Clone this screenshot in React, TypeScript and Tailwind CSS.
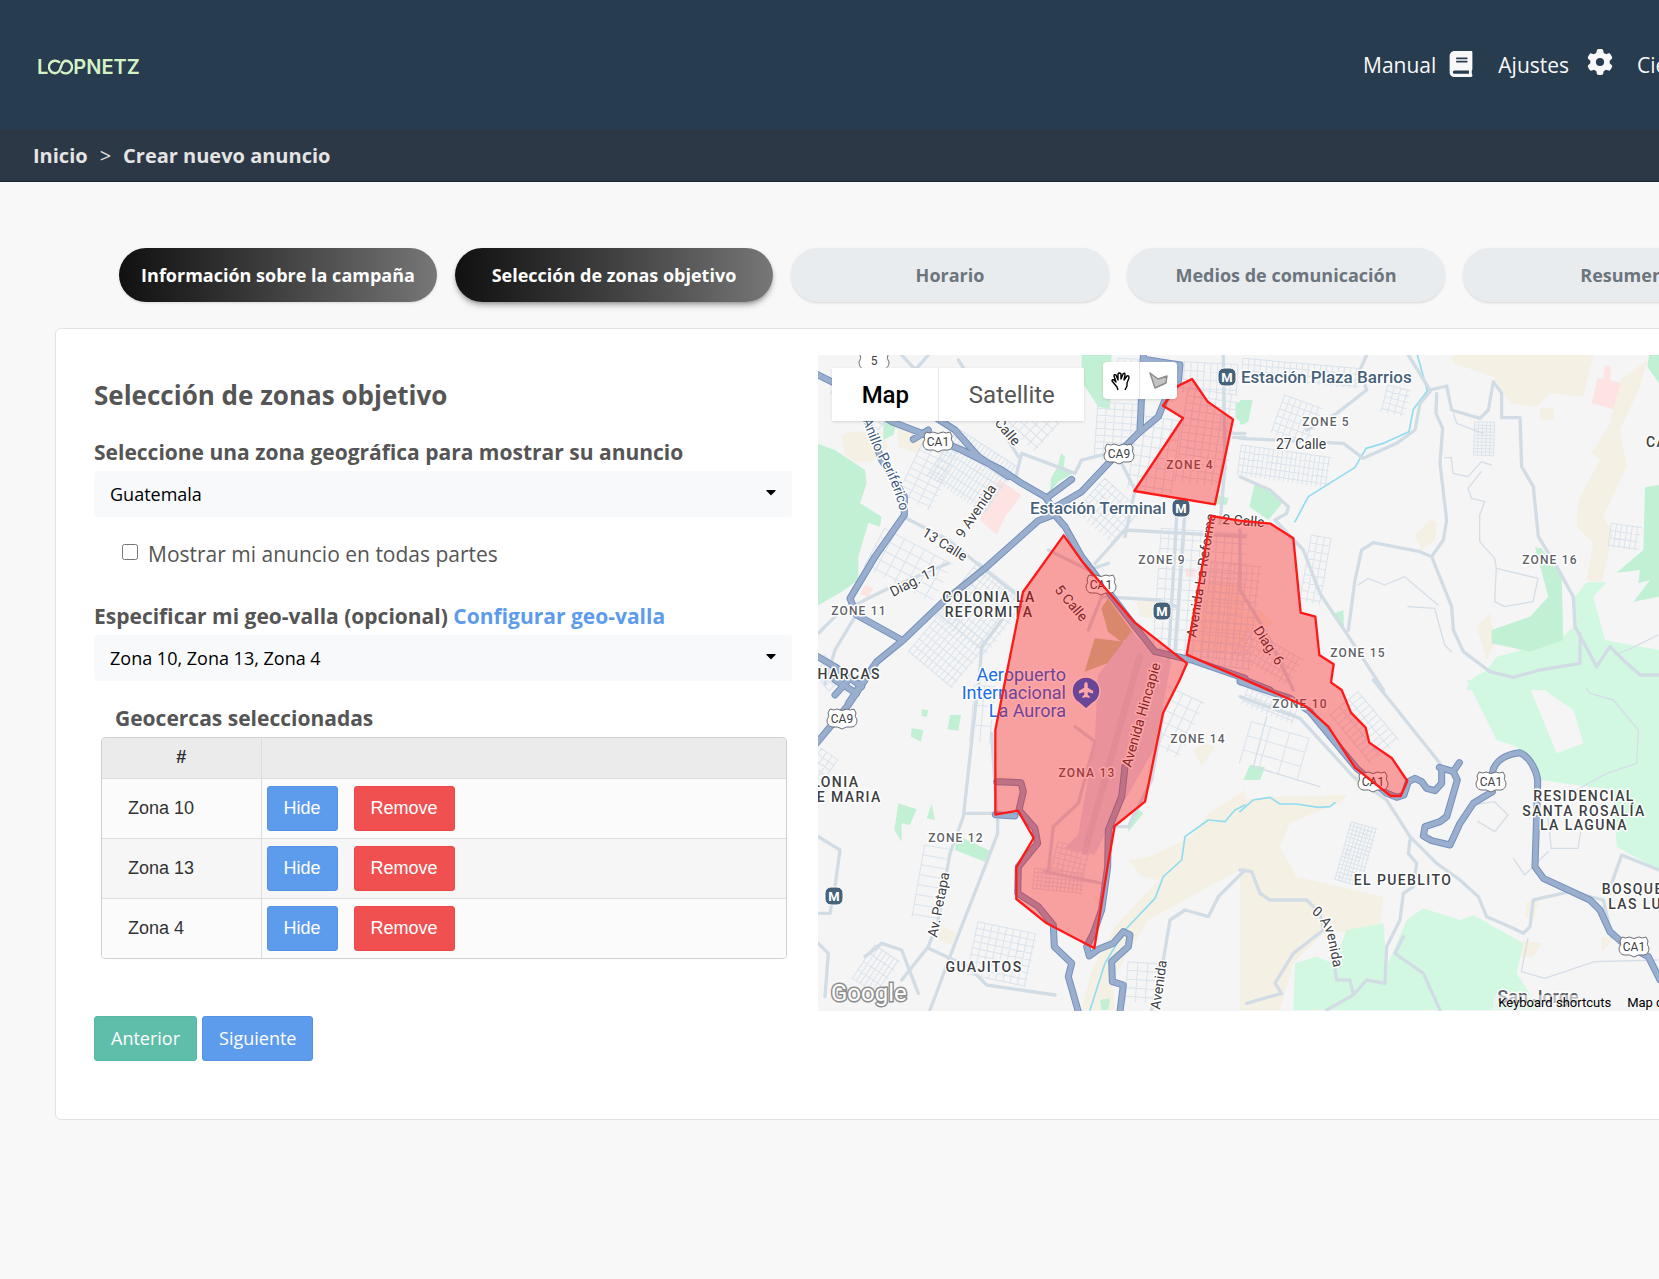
import { FaBook, FaCaretDown, FaPlane } from "react-icons/fa";
import { FaGear } from "react-icons/fa6";

const steps = [
  { label: "Información sobre la campaña", state: "done" },
  { label: "Selección de zonas objetivo", state: "current" },
  { label: "Horario", state: "pending" },
  { label: "Medios de comunicación", state: "pending" },
  { label: "Resumen", state: "pending" },
];

const stepStyles: Record<string, string> = {
  done: "bg-linear-to-r from-[#111] to-[#777] text-white shadow-sm",
  current: "bg-linear-to-r from-[#111] to-[#777] text-white shadow-md shadow-black/30",
  pending: "bg-[#e9ecef] text-[#6c757d] shadow-sm",
};

const zones = ["Zona 10", "Zona 13", "Zona 4"];

/* ---------- map data ---------- */

// The base map is drawn as four tiles, three units to the pixel
const tiles = [
  {
    offset: "translate(-9 -15)",
    forest: [],
    green: [
      "M0 278 60 300 150 360 155 400 135 460 200 500 195 530 160 518 130 620 130 690 80 725 0 772Z",
      "M800 0H890L885 178 850 170 800 95Z",
      "M738 310 750 320 746 350 775 370 730 395 705 425 708 385 728 350Z",
      "M205 210 245 215 235 255 205 270Z",
      "M565 415 580 420 560 490 538 478 535 455 555 460Z",
      "M1262 160 1290 150V225L1262 205Z",
      "M1210 435 1240 445 1235 465 1200 463Z",
    ],
    sand: [
      "M80 255 110 245 200 245 220 290 170 335 120 335 90 315Z",
      "M245 215 330 250 310 310 250 290Z",
      "M965 755 1020 750 1015 805 975 800Z",
      "M1130 900 1290 900 1290 700 1150 690Z",
    ],
    pink: ["M550 388 620 435 570 500 545 555 495 510Z", "M150 705 175 715 160 742 135 732Z", "M1112 655H1140V680H1112Z"],
    water: [],
    grey: [
      "M265 500 400 570 510 660 600 730 640 800",
      "M10 850 70 790 210 720 400 640",
      "M260 15 330 90 300 200",
      "M340 15 230 140",
      "M120 800 60 900 30 1000",
      "M600 390 620 310 780 370 800 330 880 310",
      "M610 320 560 240 430 30",
      "M840 640 930 540 1290 560",
      "M860 740 1030 750 1085 770",
      "M1085 500 1060 930",
      "M1110 480 1080 900",
      "M1225 15 1230 350 1215 520",
      "M1290 250H1255M1290 262H1255",
      "M900 300 960 420 930 560",
      "M560 810 500 890 490 1020",
      "M700 600 820 660 880 640",
      "M820 840 860 740",
    ],
    highways: [
      "M0 70 60 100 230 215 320 250 440 300 560 360 620 400 690 440 715 475",
      "M350 195 420 240 490 320 580 380",
      "M715 475 800 425 880 340 970 250 1030 200 1050 150 1090 95 1095 45 985 28",
      "M985 15 975 245",
      "M770 388 700 440",
      "M340 240 295 268",
      "M715 495 670 512 510 655 380 760 265 870 185 935 140 1000 100 1060",
      "M130 140 200 330 268 440 268 495 180 620 105 745 125 795 260 870",
      "M715 490 750 530 800 620 960 830 1020 905 1130 930 1290 985",
      "M0 915 60 950 140 1010",
      "M60 1035 100 990",
    ],
  },
  {
    offset: "translate(1266 -15)",
    forest: ["M1257 720 1100 697H1040L1005 740 1000 830 960 870 770 920 740 960 690 990 680 1020H1257V900L1095 870 1060 740 1100 697Z"],
    green: [
      "M0 150 38 150 25 215 0 225Z",
      "M45 395 130 455 85 510 28 470Z",
      "M885 592 905 595 965 680 970 870 870 905 755 880 755 840 870 800 925 740Z",
      "M1257 0H1230L1222 50 1257 100Z",
      "M1257 405 1215 412 1210 600 1130 668 1200 660 1195 700 1230 690 1180 755 1257 740Z",
      "M285 790 310 780 312 830 290 810Z",
      "M225 700 290 800 300 830 240 740Z",
    ],
    sand: [
      "M635 15H1060L1030 140 930 130 890 170 810 160 760 80 640 40Z",
      "M1222 30 1140 90 1110 220 1055 310 1080 330 1015 450 1010 530 1060 580 1040 690 1085 697 1120 550 1090 500 1160 350 1140 240 1200 110Z",
      "M570 510 590 515 585 570 545 600 525 555Z",
      "M750 790 765 880 740 930 710 830Z",
      "M900 175H942V210H900Z",
      "M60 780 100 820 40 850 0 830V790Z",
    ],
    pink: ["M1095 45 1112 50 1110 90 1142 100 1120 178 1055 160 1072 85 1090 88Z"],
    water: ["M532 15 562 122 520 178 507 245 430 280 378 295 345 352 205 440 165 515"],
    grey: [
      "M505 15 570 120 620 108 635 180 720 205 745 180 760 95 785 130 785 203H840L845 350 880 410 895 560 950 650 1000 740 1005 830 1070 950 1110 890 1150 930 1200 975H1257",
      "M570 125 540 160 525 240 470 280 370 325 310 280 200 275 0 265",
      "M590 130 588 190 608 235 600 340 620 510 610 570 575 620 540 605 400 578 365 600 345 690 325 840",
      "M575 620 635 770 640 840 670 905 750 965 820 982 900 960 1020 940 1020 850",
      "M380 15 360 60 380 120 290 190 200 240",
      "M0 380 90 420 145 470 140 490 105 510 190 600 240 730 320 850 430 1020",
      "M0 540V720L80 850 160 1020",
    ],
    highways: ["M0 985 90 1020"],
  },
  {
    offset: "translate(-9 975)",
    forest: [],
    green: [
      "M250 370 305 388 285 435 260 430 260 485 238 450Z",
      "M425 465 525 512 510 545 420 510Z",
      "M405 105 438 105 430 152 398 148Z",
      "M290 145 325 150 318 185 288 170Z",
      "M350 372 360 420 335 415Z",
      "M320 88 340 90 335 110 320 108Z",
      "M940 430 960 380 985 400 940 455Z",
      "M855 960 885 955 880 990 860 990Z",
    ],
    sand: [
      "M1290 330 1180 400 1130 470 1000 530 940 540 980 590 1030 600 900 740 830 870 800 990H900L890 900 1000 720 1290 560Z",
      "M370 730 425 760 410 795 370 780Z",
      "M1165 190 1200 200 1160 260 1135 210Z",
      "M545 285 595 295 590 305H545Z",
      "M830 640 860 660 850 680Z",
    ],
    pink: [],
    water: ["M1290 375 1260 390 1230 425 1180 420 1110 470 1100 540 1045 590 1020 655 930 750 870 850 825 990"],
    grey: [
      "M485 50 445 410 405 520 370 720 340 800 260 900",
      "M548 405V460L510 560 420 790 345 990",
      "M530 160 545 400 450 400",
      "M340 805 460 860 515 915 720 945",
      "M10 470 75 510 60 620 45 700H10",
      "M10 790 40 820 30 950",
      "M700 575 715 440 790 370 840 185 780 140",
      "M690 575 860 610",
      "M1045 100 1010 300 940 440 890 440",
      "M1290 570 1210 650 1180 710 1110 690 1065 720 1045 840 1010 990",
      "M150 830 200 790 260 810 310 940",
    ],
    highways: [
      "M150 0 100 75 0 195",
      "M60 0 125 40",
      "M545 305 618 308 625 335 612 390 660 445 668 490 610 560 608 640 670 680 715 735 718 800 770 850 760 890 790 995",
      "M930 260 920 350 880 450 878 560 860 690 835 760 815 800 823 828 850 808 895 790 925 755 945 765 940 800 890 845 892 905 925 915 915 995",
      "M541 404 600 408",
    ],
  },
  {
    offset: "translate(1266 975)",
    forest: [
      "M680 0H860L950 220 1030 190 1000 90 870 0H1257V570L1130 500 1120 330 900 300 830 200 770 180Z",
      "M500 720 550 685 660 720 700 705 850 790 830 880 900 990H160L165 850 230 830 280 850 320 750 430 730 440 860Z",
    ],
    green: ["M30 255 75 262 60 300 10 300Z"],
    sand: [
      "M0 360 90 350 320 345 300 370 220 400 150 430 120 500 170 590 430 650 420 730 320 755 250 760 160 850 120 990H0Z",
      "M860 665 900 655 880 720 855 710Z",
      "M850 780 905 790 880 830 840 830Z",
      "M1085 770 1125 775 1085 815Z",
      "M320 270 370 290 350 320Z",
    ],
    pink: [],
    water: ["M0 395 40 360 90 352 120 372 170 372 235 382 270 380 285 368"],
    grey: [
      "M400 0 600 250",
      "M0 50 180 115 340 290 440 360 510 470 590 550 660 600 715 650 740 710 810 740 850 760 870 740 880 660 990 635 1090 660 1115 770",
      "M0 570 35 575 60 640 90 660 200 660 240 700 250 750 160 820 105 910 125 940 20 970",
      "M510 480 505 520 530 550 520 620 490 640 480 720 440 800 435 910 380 900 340 945 330 900 290 900 280 840",
      "M340 945 260 990",
      "M490 770 465 820 550 880 600 990",
      "M1110 640 1115 610 1145 525 1257 570",
    ],
    highways: [
      "M0 5 150 55 210 95 350 265 440 340 470 352 492 345 505 305 525 295 545 305 560 325 585 332 605 310 605 265",
      "M598 262 640 275 658 248",
      "M640 275 652 300 620 410 600 425 555 440 550 468 575 482 630 495 660 430 700 370 757 335",
      "M757 278C765 240 800 222 840 218C870 230 895 280 893 310L885 560 910 595 1050 660 1080 690 1110 755 1150 790 1225 830 1260 900",
    ],
  },
];

// Minor streets outside the regular blocks
const lanes = [
  "M1906 175 1916 205 1996 235M1880 308H1900L1905 355 1950 365 1990 320 2020 330",
  "M1990 350 1950 400 1960 430 2000 440 1985 480 1985 560 2030 610 2035 640 2160 670 2145 740 2060 755 2030 740 2035 640",
  "M1620 690 1650 670 1700 690 1760 665 1860 750M1770 755 1850 760 1880 870 1900 890",
  "M2306 1000 2316 1015 2386 1035 2461 1125 2456 1225 2366 1255 2276 1305",
  "M2390 900 2440 880 2520 840M2086 1510 2120 1560 2190 1490",
  "M1346 1085 1306 1235 1506 1295M2190 1390 2200 1480 2280 1480 2290 1420",
  "M2130 1750 2110 1850 2180 1870 2330 1820 2520 1815",
  "M1940 1400 1960 1350 2030 1340 2070 1380 2030 1430 1980 1400",
];

// x, y, rotation, width, height, column step, row step
const streetGrids = [
  [420, 220, 33, 210, 170, 12, 26],
  [480, 620, 38, 190, 210, 14, 22],
  [840, 140, 4, 120, 170, 26, 20],
  [860, 370, 42, 150, 130, 16, 22],
  [960, 180, 8, 130, 220, 26, 30],
  [1030, 520, 4, 260, 380, 24, 30],
  [330, 230, 26, 110, 210, 34, 20],
  [200, 520, 28, 230, 130, 34, 30],
  [380, 760, 40, 170, 170, 15, 24],
  [1110, 100, 8, 150, 280, 22, 22],
  [900, 10, 3, 360, 90, 20, 26],
  [1270, 270, 8, 270, 90, 14, 20],
  [1400, 120, 20, 120, 120, 18, 22],
  [1275, 10, 5, 350, 60, 18, 18],
  [1710, 90, 15, 70, 80, 20, 18],
  [1970, 200, 2, 60, 100, 12, 10],
  [1180, 620, 6, 150, 310, 18, 22],
  [1290, 820, 30, 190, 90, 16, 20],
  [1290, 1000, 22, 160, 50, 16, 20],
  [2380, 505, 8, 90, 70, 16, 22],
  [1480, 540, 10, 60, 200, 20, 24],
  [1620, 1010, 50, 190, 110, 18, 36],
  [1600, 1400, 16, 80, 180, 11, 12],
  [720, 1460, 14, 100, 90, 16, 16],
  [650, 1540, 6, 150, 60, 12, 12],
  [480, 1700, 12, 180, 160, 22, 20],
  [320, 1470, 10, 80, 220, 80, 30],
  [930, 1820, 4, 110, 120, 30, 26],
  [170, 1770, 34, 90, 120, 14, 30],
  [470, 990, 5, 60, 170, 30, 60],
  [10, 1180, 35, 60, 90, 20, 20],
  [1040, 990, 25, 130, 180, 30, 34],
  [1300, 1100, 16, 180, 130, 60, 44],
  [80, 60, 38, 190, 70, 30, 24],
  [560, 60, 42, 220, 110, 24, 24],
  [20, 900, 50, 90, 60, 18, 20],
];

function gridPath(w: number, h: number, dx: number, dy: number) {
  let d = "";
  for (let x = 0; x <= w; x += dx) d += `M${x} 0V${h}`;
  for (let y = 0; y <= h; y += dy) d += `M0 ${y}H${w}`;
  return d;
}

const geofences = [
  "1122,72 1169,140 1245,193 1191,448 949,408 1095,189 1035,152 1076,95",
  "737,541 794,621 951,803 1107,925 1085,975 1035,1075 981,1340 890,1413 871,1522 829,1780 709,1717 686,1705 595,1632 595,1537 647,1449 600,1367 532,1379 532,1125 556,1005 615,711",
  "1179,483 1266,497 1358,506 1426,550 1448,773 1492,785 1504,900 1547,928 1539,982 1571,1005 1599,1073 1643,1118 1654,1163 1722,1210 1768,1278 1748,1323 1718,1323 1611,1238 1531,1115 1461,1053 1266,968 1106,899",
];

const zoneLabels = [
  { text: "ZONE 4", x: 372, y: 114 },
  { text: "ZONE 5", x: 508, y: 71 },
  { text: "ZONE 9", x: 344, y: 209 },
  { text: "ZONE 10", x: 482, y: 353 },
  { text: "ZONE 11", x: 41, y: 260 },
  { text: "ZONE 12", x: 138, y: 487 },
  { text: "ZONA 13", x: 269, y: 422 },
  { text: "ZONE 14", x: 380, y: 388 },
  { text: "ZONE 15", x: 540, y: 302 },
  { text: "ZONE 16", x: 732, y: 209 },
];

const placeLabels = [
  { text: "COLONIA LA", x: 171, y: 247 },
  { text: "REFORMITA", x: 171, y: 262 },
  { text: "CHARCAS", x: 26, y: 324 },
  { text: "COLONIA", x: 7, y: 432 },
  { text: "DE MARIA", x: 26, y: 447 },
  { text: "GUAJITOS", x: 166, y: 617 },
  { text: "EL PUEBLITO", x: 585, y: 530 },
  { text: "RESIDENCIAL", x: 766, y: 446 },
  { text: "SANTA ROSALÍA", x: 766, y: 461 },
  { text: "LA LAGUNA", x: 766, y: 475 },
  { text: "BOSQUES DE", x: 832, y: 539 },
  { text: "LAS LUCES", x: 832, y: 554 },
  { text: "CAYALÁ", x: 858, y: 92 },
];

const streetLabels = [
  { text: "27 Calle", x: 458, y: 94, angle: 0 },
  { text: "Calle", x: 176, y: 68, angle: 50 },
  { text: "9 Avenida", x: 145, y: 184, angle: -56 },
  { text: "13 Calle", x: 103, y: 180, angle: 32 },
  { text: "Diag. 17", x: 75, y: 242, angle: -27 },
  { text: "5 Calle", x: 236, y: 235, angle: 50 },
  { text: "2 Calle", x: 404, y: 169, angle: 4 },
  { text: "Avenida La Reforma", x: 378, y: 283, angle: -81 },
  { text: "Diag. 6", x: 435, y: 275, angle: 57 },
  { text: "Avenida Hincapie", x: 313, y: 413, angle: -74 },
  { text: "Av. Petapa", x: 119, y: 583, angle: -79 },
  { text: "Avenida", x: 342, y: 655, angle: -82 },
];

const shields = [
  { text: "5", x: 56, y: 6 },
  { text: "CA1", x: 120, y: 87 },
  { text: "CA9", x: 301, y: 99 },
  { text: "CA1", x: 283, y: 230 },
  { text: "CA9", x: 24, y: 364 },
  { text: "CA1", x: 555, y: 427 },
  { text: "CA1", x: 673, y: 427 },
  { text: "CA1", x: 816, y: 592 },
];

const metroStops = [
  { x: 409, y: 22 },
  { x: 363, y: 153 },
  { x: 344, y: 256 },
  { x: 16, y: 541 },
];

function BaseMap() {
  return (
    <g transform="scale(0.33333)" fill="none" strokeLinejoin="round" strokeLinecap="round">
      {tiles.map((tile) => (
        <g key={tile.offset} transform={tile.offset}>
          <path d={tile.sand.join("")} fill="#f5f0e4" />
          <path d={tile.forest.join("")} fill="#d3f8e2" />
          <path d={tile.green.join("")} fill="#c2f0d4" />
          <path d={tile.pink.join("")} fill="#fde3e1" />
        </g>
      ))}
      {/* airport grounds and runway */}
      <path d="M850 760 870 730 950 840 910 860 870 830ZM800 950 830 850 920 860 880 920Z" fill="#c5cfa8" />
      <path d="M840 960 940 830 1010 900 1060 920 1010 1180 860 1440 830 1500 740 1480 780 1440 830 1160Z" fill="#dde1ee" />
      <path d="M965 905 800 1490" stroke="#d2d7e8" strokeWidth={20} />
      {streetGrids.map(([x, y, angle, w, h, dx, dy]) => (
        <path
          key={`${x}-${y}`}
          d={gridPath(w, h, dx, dy)}
          transform={`translate(${x} ${y}) rotate(${angle})`}
          stroke="#dae3ec"
          strokeWidth={3}
        />
      ))}
      <path d={lanes.join("")} stroke="#d5dee7" strokeWidth={4} />
      {tiles.map((tile) => (
        <g key={tile.offset} transform={tile.offset}>
          <path d={tile.water.join("")} stroke="#90dcf0" strokeWidth={5} />
          <path d={tile.grey.join("")} stroke="#d2dce5" strokeWidth={10} />
        </g>
      ))}
      {tiles.map((tile) => (
        <path key={tile.offset} transform={tile.offset} d={tile.highways.join("")} stroke="#7490bd" strokeWidth={21} />
      ))}
      {tiles.map((tile) => (
        <path key={tile.offset} transform={tile.offset} d={tile.highways.join("")} stroke="#9aafce" strokeWidth={15} />
      ))}
    </g>
  );
}

function MapLabels() {
  return (
    <g
      className="font-[Roboto,sans-serif] [paint-order:stroke]"
      stroke="#ffffff"
      strokeWidth={3}
      strokeLinejoin="round"
    >
      <g className="text-[12px] font-medium tracking-widest" fill="#5f6368" textAnchor="middle">
        {zoneLabels.map((l) => (
          <text key={l.text} x={l.x} y={l.y}>{l.text}</text>
        ))}
      </g>
      <g className="text-[14px] font-medium tracking-widest" fill="#3c4043" textAnchor="middle">
        {placeLabels.map((l) => (
          <text key={l.text} x={l.x} y={l.y}>{l.text}</text>
        ))}
      </g>
      <g className="text-[14px]" fill="#3c4043">
        {streetLabels.map((l) => (
          <text key={l.text} transform={`translate(${l.x} ${l.y}) rotate(${l.angle})`}>{l.text}</text>
        ))}
        <path id="periferico" d="M28 22 54 90Q76 130 82 156" fill="none" stroke="none" />
        <text fill="#3d5a80">
          <textPath href="#periferico" startOffset="100%" textAnchor="end">Anillo Periférico</textPath>
        </text>
        <path id="avenida-0" d="M493 558Q508 568 511 590L519 630" fill="none" stroke="none" />
        <text>
          <textPath href="#avenida-0">0 Avenida</textPath>
        </text>
      </g>
      <g className="text-[17px] font-medium" fill="#46617a">
        <text x={423} y={28}>Estación Plaza Barrios</text>
        <text x={212} y={159}>Estación Terminal</text>
      </g>
      <g className="text-[18px]" fill="#1a6ce8" textAnchor="end">
        <text x={248} y={326}>Aeropuerto</text>
        <text x={248} y={344}>Internacional</text>
        <text x={248} y={362}>La Aurora</text>
      </g>
      <text x={720} y={648} className="text-[18px] font-medium" fill="#5f6368" textAnchor="middle">
        San Jorge
      </text>
    </g>
  );
}

function MapMarkers() {
  return (
    <g className="font-[Roboto,sans-serif]" textAnchor="middle">
      {shields.map((s) => (
        <g key={`${s.x}-${s.y}`} transform={`translate(${s.x} ${s.y})`}>
          <path
            d="M-12-10Q-8-8-5-10Q0-7 5-10Q8-8 12-10L14-6Q12-3 15 1Q15 7 10 8Q4 7 0 10Q-4 7-10 8Q-15 7-15 1Q-12-3-14-6Z"
            fill="#fff"
            stroke="#6b6f75"
          />
          <text y={4} className="text-[12px]" fill="#3c4043">{s.text}</text>
        </g>
      ))}
      {metroStops.map((m) => (
        <g key={`${m.x}-${m.y}`} transform={`translate(${m.x} ${m.y})`}>
          <rect x={-9} y={-9} width={18} height={18} rx={6} fill="#46617a" stroke="#fff" />
          <text y={5} className="text-[13px] font-bold" fill="#fff">M</text>
        </g>
      ))}
      <g transform="translate(268 335)">
        <path d="M0 19 7 13A14 14 0 1 0-7 13Z" fill="#1a6ce8" stroke="#fff" strokeWidth={1.5} />
        <FaPlane x={-8} y={-8} size={16} color="#fff" transform="rotate(-90)" />
      </g>
    </g>
  );
}

function ZoneMap() {
  return (
    <div className="relative h-[656px] overflow-hidden bg-[#f5f5f5]">
      <svg className="block h-full w-full" role="img" aria-label="Mapa de zonas">
        <BaseMap />
        <MapLabels />
        <MapMarkers />
        <g transform="scale(0.33333)" fill="#ff0000" fillOpacity={0.35} stroke="#ff1a1a" strokeWidth={7}>
          {geofences.map((points) => (
            <polygon key={points} points={points} strokeLinejoin="round" />
          ))}
        </g>
        <text
          x={13}
          y={646}
          className="font-[Roboto,sans-serif] text-[24px] [paint-order:stroke]"
          fill="#fff"
          stroke="#8d8d8d"
          strokeWidth={3}
        >
          Google
        </text>
      </svg>

      {/* Map type */}
      <div className="absolute left-[14px] top-[13px] flex h-[53px] divide-x divide-gray-200 bg-white font-[Roboto,sans-serif] text-[24px] shadow">
        <button type="button" className="w-[107px] font-medium text-black">Map</button>
        <button type="button" className="w-[145px] text-[#565656]">Satellite</button>
      </div>

      {/* Drawing tools */}
      <div className="absolute left-[285px] top-[7px] flex h-[37px] divide-x divide-gray-200 rounded-sm bg-white shadow">
        <button type="button" aria-label="Mover mapa" className="grid w-[37px] place-items-center">
          <svg width="20" height="20" viewBox="0 0 20 20" fill="#fff" stroke="#000" strokeWidth="1.4" strokeLinejoin="round">
            <path d="M7 19 6 16 1 10Q1 8 3 9L5 11 3 5Q3 3 5 4L7 9 7 3Q8 1 10 3L10 8 12 3Q14 1 14 4L13 9 16 5Q18 4 18 7L16 12 16 15 14 19" />
          </svg>
        </button>
        <button type="button" aria-label="Dibujar zona" className="grid w-[37px] place-items-center">
          <svg width="20" height="18" viewBox="0 0 20 18" fill="#c4c4c4" stroke="#8c8c8c" strokeWidth="1.4" strokeLinejoin="round">
            <path d="M1 1 9 7 18 4 17 11 6 16Z" />
          </svg>
        </button>
      </div>

      <div className="absolute bottom-0 left-[675px] flex h-4 gap-4 whitespace-nowrap bg-[#f5f5f5]/60 px-[5px] font-[Roboto,sans-serif] text-[13px] leading-4 text-black">
        <button type="button">Keyboard shortcuts</button>
        <span>Map data ©2024 Google</span>
      </div>
    </div>
  );
}

function Logo() {
  return (
    <a href="#" aria-label="LOOPNETZ" className="flex items-center pt-1 font-[Inter,sans-serif] text-[20px] font-semibold leading-none text-[#d5f2c4]">
      L
      <svg width="25" height="16" viewBox="1 0 25 16" fill="none" stroke="currentColor" strokeWidth="2.4">
        <path d="M13 3.800A6.300 6.300 0 1 0 8 14.300Q11 14 12.800 11L14.500 6.500Q16 1.800 19 1.800A6.300 6.300 0 1 1 14 12.300" />
      </svg>
      PNETZ
    </a>
  );
}

function Caret() {
  return <FaCaretDown className="pointer-events-none absolute right-[13px] top-[13px] size-4 text-black" />;
}

const selectClass = "h-[46px] w-full appearance-none rounded bg-[#f8f9fb] px-4 text-[18px] text-black";
const buttonClass = "h-[45px] rounded-[3px] border px-4 text-[18px] text-white";

export default function App() {
  return (
    <div className="min-h-screen overflow-x-hidden bg-[#f8f8f8] font-['Open_Sans',sans-serif] text-[#555]">
      <div className="min-w-[1900px]">
        <header className="flex h-[130px] items-center justify-between bg-[#283c50] pl-[37px] pr-10">
          <Logo />
          <nav className="flex w-[497px] items-center pt-[2px] text-[21px] text-[#f8f8f8]">
            <a href="#" className="flex items-center gap-3">
              Manual <FaBook className="mb-1 size-[26px]" />
            </a>
            <a href="#" className="ml-6 flex items-center gap-[18px]">
              Ajustes <FaGear className="mb-2 size-[26px]" />
            </a>
            <a href="#" className="ml-6 whitespace-nowrap">Cierre de sesión</a>
          </nav>
        </header>

        <nav className="flex h-[52px] items-center gap-3 border-b border-[#1d2733] bg-[#2d3846] px-[33px] text-[20px] text-[#e4e4e4]">
          <a href="#" className="font-bold">Inicio</a>
          <span>&gt;</span>
          <a href="#" className="font-bold">Crear nuevo anuncio</a>
        </nav>

        <ol className="mx-[119px] mt-[66px] grid grid-cols-5 gap-[18px]">
          {steps.map((step) => (
            <li key={step.label}>
              <button type="button" className={`h-[54px] w-full rounded-full text-[18px] font-bold ${stepStyles[step.state]}`}>
                {step.label}
              </button>
            </li>
          ))}
        </ol>

        <main className="mx-[55px] mt-[26px] grid grid-cols-[7fr_10fr] gap-[26px] rounded-md border border-[#e2e2e2] bg-white pb-[58px] pl-[38px] pr-7 pt-[26px]">
          <form className="pt-[22px]">
            <h1 className="text-[26px] font-bold leading-9">Selección de zonas objetivo</h1>

            <label htmlFor="area" className="mt-6 block pb-1 text-[21px] font-bold leading-[30px]">
              Seleccione una zona geográfica para mostrar su anuncio
            </label>
            <div className="relative">
              <select id="area" className={selectClass}>
                <option>Guatemala</option>
              </select>
              <Caret />
            </div>

            <div className="mt-[22px] flex items-center gap-[10px] pl-7 text-[21px] leading-[30px]">
              <input id="everywhere" type="checkbox" className="mb-1 size-4" />
              <label htmlFor="everywhere">Mostrar mi anuncio en todas partes</label>
            </div>

            <div className="mt-8 pb-1 text-[21px] font-bold leading-[30px]">
              <label htmlFor="geofence">Especificar mi geo-valla (opcional)</label>{" "}
              <a href="#" className="text-[#5d9cec]">Configurar geo-valla</a>
            </div>
            <div className="relative">
              <select id="geofence" className={selectClass}>
                <option>Zona 10, Zona 13, Zona 4</option>
              </select>
              <Caret />
            </div>

            <h2 className="mt-[22px] pl-[21px] text-[21px] font-bold leading-[30px]">Geocercas seleccionadas</h2>
            <div className="mx-[7px] mr-[5px] mt-1 overflow-hidden rounded border border-[#d0d0d0]">
              <table className="w-full font-['Liberation_Sans',sans-serif] text-[18px] text-[#333]">
                <thead>
                  <tr className="h-[40px] bg-[#ebebeb]">
                    <th scope="col" className="w-[159px] border-r border-[#ddd] text-[#2b2b33]">#</th>
                    <td />
                  </tr>
                </thead>
                <tbody>
                  {zones.map((zone) => (
                    <tr key={zone} className="h-[60px] border-t border-[#ddd] odd:bg-[#fbfbfb] even:bg-[#f6f6f6]">
                      <td className="border-r border-[#ddd] pl-[26px]">{zone}</td>
                      <td className="pl-[5px]">
                        <div className="flex gap-4">
                          <button type="button" className={`${buttonClass} border-[#5592e3] bg-[#5d9cec]`}>Hide</button>
                          <button type="button" className={`${buttonClass} border-[#ee4545] bg-[#f05050]`}>Remove</button>
                        </div>
                      </td>
                    </tr>
                  ))}
                </tbody>
              </table>
            </div>

            <div className="mt-[57px] flex gap-[5px]">
              <button type="button" className={`${buttonClass} border-[#55b8a3] bg-[#5fbeaa]`}>Anterior</button>
              <button type="submit" className={`${buttonClass} border-[#5592e3] bg-[#5d9cec]`}>Siguiente</button>
            </div>
          </form>

          <ZoneMap />
        </main>
      </div>
    </div>
  );
}
